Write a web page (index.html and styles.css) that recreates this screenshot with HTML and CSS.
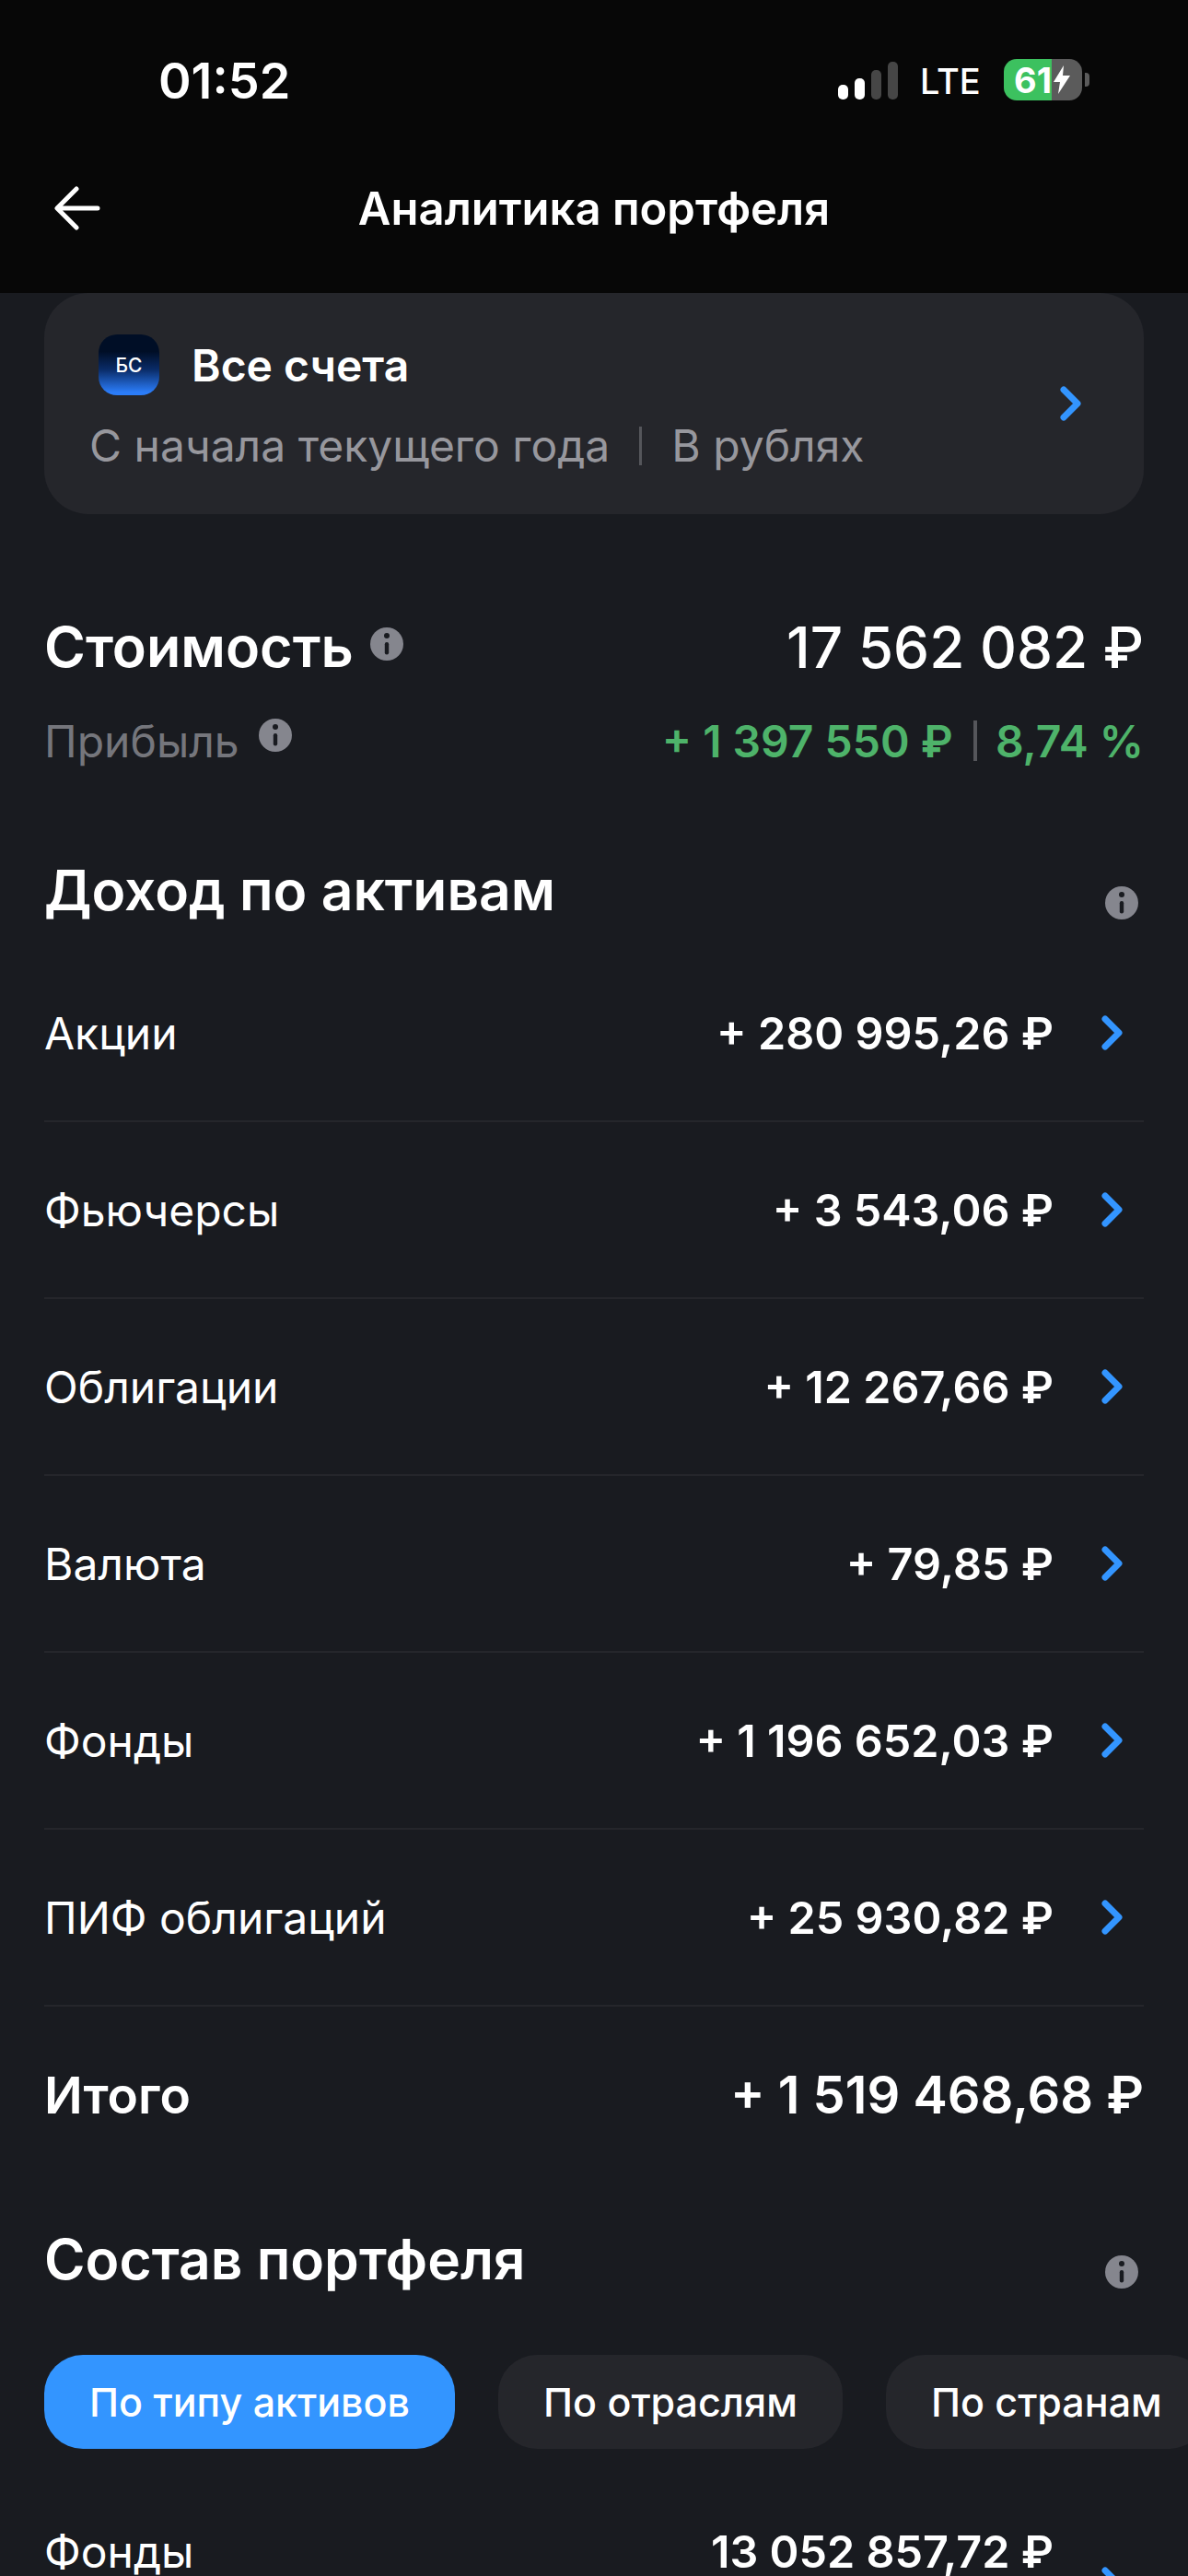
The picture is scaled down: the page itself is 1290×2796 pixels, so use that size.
FILE: index.html
```html
<!DOCTYPE html>
<html>

<head>
  <title>Аналитика портфеля</title>
  <meta charset="utf-8">
  <link rel="stylesheet" href="styles.css">
</head>

<body>
  <svg class="sprite" width="0" height="0">
    <symbol id="chevron" viewBox="0 0 24 38">
      <path d="M4 4 L19 19 L4 34" fill="none" stroke="#3395ff" stroke-width="7" stroke-linecap="round" stroke-linejoin="round"/>
    </symbol>
    <symbol id="info" viewBox="0 0 36 36">
      <circle cx="18" cy="18" r="18" fill="#85868e"/>
      <circle cx="18" cy="9" r="3" fill="#191b20"/>
      <rect x="15.8" y="16" width="4.4" height="13.5" rx="2.2" fill="#191b20"/>
    </symbol>
  </svg>

  <header class="top">
    <div class="status">
      <span class="clock">01:52</span>
      <div class="status-right">
        <div class="signal">
          <i class="bar bar-1 on"></i>
          <i class="bar bar-2 on"></i>
          <i class="bar bar-3"></i>
          <i class="bar bar-4"></i>
        </div>
        <span class="lte">LTE</span>
        <div class="battery">
          <span>61</span>
          <svg width="20" height="31" viewBox="0 0 20 31"><path d="M12 0 L1 18 H8 L6 31 L19 11 H11 Z" fill="#fff"/></svg>
        </div>
        <i class="nub"></i>
      </div>
    </div>
    <div class="nav">
      <svg class="back" width="54" height="48" viewBox="0 0 54 48">
        <path d="M25 3 L4 24 L25 45 M5 24 H48" fill="none" stroke="#fff" stroke-width="5" stroke-linecap="round" stroke-linejoin="round"/>
      </svg>
      <span class="nav-title">Аналитика портфеля</span>
    </div>
  </header>

  <main class="content">
    <section class="account">
      <div class="account-text">
        <div class="account-name">
          <div class="logo">БС</div>
          <span>Все счета</span>
        </div>
        <div class="account-sub">
          <span>С начала текущего года</span>
          <i class="divider"></i>
          <span>В рублях</span>
        </div>
      </div>
      <svg class="chevron"><use href="#chevron"/></svg>
    </section>

    <section class="summary">
      <div class="summary-row">
        <div class="label-big">Стоимость <svg class="info"><use href="#info"/></svg></div>
        <div class="value-big">17 562 082 ₽</div>
      </div>
      <div class="summary-row second">
        <div class="label-gray">Прибыль <svg class="info"><use href="#info"/></svg></div>
        <div class="value-green">+ 1 397 550 ₽ <i class="green-sep"></i> 8,74 %</div>
      </div>
    </section>

    <section class="section income">
      <div class="section-head">
        <h2>Доход по активам</h2>
        <svg class="info end"><use href="#info"/></svg>
      </div>
      <div class="row"><span>Акции</span><b>+ 280 995,26 ₽</b><svg class="chevron"><use href="#chevron"/></svg></div>
      <div class="row"><span>Фьючерсы</span><b>+ 3 543,06 ₽</b><svg class="chevron"><use href="#chevron"/></svg></div>
      <div class="row"><span>Облигации</span><b>+ 12 267,66 ₽</b><svg class="chevron"><use href="#chevron"/></svg></div>
      <div class="row"><span>Валюта</span><b>+ 79,85 ₽</b><svg class="chevron"><use href="#chevron"/></svg></div>
      <div class="row"><span>Фонды</span><b>+ 1 196 652,03 ₽</b><svg class="chevron"><use href="#chevron"/></svg></div>
      <div class="row"><span>ПИФ облигаций</span><b>+ 25 930,82 ₽</b><svg class="chevron"><use href="#chevron"/></svg></div>
      <div class="total"><span>Итого</span><b>+ 1 519 468,68 ₽</b></div>
    </section>

    <section class="section structure">
      <div class="section-head">
        <h2>Состав портфеля</h2>
        <svg class="info end"><use href="#info"/></svg>
      </div>
      <div class="pills">
        <div class="pill active">По типу активов</div>
        <div class="pill">По отраслям</div>
        <div class="pill">По странам</div>
      </div>
      <div class="row last"><span>Фонды</span><b>13 052 857,72 ₽</b><svg class="chevron"><use href="#chevron"/></svg></div>
    </section>
  </main>
</body>

</html>
```
FILE: styles.css
```css
html, body {
  margin: 0;
  height: 2796px;
  overflow: hidden;
}

body {
  width: 1290px;
  background-color: #191b20;
  color: #fff;
  font-family: "Inter", "Liberation Sans", sans-serif;
}

.sprite {
  position: absolute;
}

/* status bar and title */
.top {
  height: 318px;
  background-color: #070707;
}

.status {
  height: 174px;
  box-sizing: border-box;
  padding: 58px 0 0 172px;
  display: flex;
  justify-content: space-between;
}

.clock {
  font-size: 54px;
  line-height: 60px;
  font-weight: 600;
}

.status-right {
  height: 45px;
  margin-top: 6px;
  padding-right: 107px;
  display: flex;
  align-items: center;
}

.signal {
  display: flex;
  align-items: flex-end;
  gap: 7px;
  height: 41px;
  margin-top: 1px;
}

.bar {
  display: block;
  width: 11px;
  border-radius: 5px;
  background-color: #464646;
}

.bar.on {
  background-color: #fff;
}

.bar-1 { height: 16px; }
.bar-2 { height: 23px; }
.bar-3 { height: 32px; }
.bar-4 { height: 41px; }

.lte {
  margin: 3px 0 0 24px;
  width: 91px;
  font-size: 38px;
  font-weight: 500;
}

.battery {
  width: 85px;
  height: 45px;
  border-radius: 14px;
  box-sizing: border-box;
  padding-left: 11px;
  display: flex;
  align-items: center;
  gap: 1px;
  font-size: 38px;
  font-weight: 700;
  background: linear-gradient(to right, #3cc15f 52px, #5b5b5b 52px);
}

.nub {
  display: block;
  width: 5px;
  height: 15px;
  margin-left: 3px;
  border-radius: 0 4px 4px 0;
  background-color: #5b5b5b;
}

.nav {
  display: flex;
  align-items: center;
  position: relative;
  justify-content: center;
  height: 104px;
}

.back {
  position: absolute;
  left: 58px;
  top: 28px;
}

.nav-title {
  font-size: 49px;
  font-weight: 600;
}

.content {
  padding: 0 48px;
}

/* account card */
.account {
  height: 240px;
  box-sizing: border-box;
  padding: 0 67px 0 49px;
  display: flex;
  align-items: center;
  justify-content: space-between;
  border-radius: 48px;
  background-color: #25262b;
}

.account-text {
  align-self: flex-start;
  margin-top: 45px;
}

.account-name {
  display: flex;
  align-items: center;
  gap: 35px;
  padding-left: 10px;
  font-size: 48px;
  font-weight: 600;
}

.logo {
  width: 66px;
  height: 66px;
  border-radius: 20px;
  display: flex;
  align-items: center;
  justify-content: center;
  font-size: 21px;
  font-weight: 500;
  background: linear-gradient(to bottom, #000e26 28%, #0a2c68 58%, #2b7cf8 95%);
}

.account-sub {
  margin-top: 25px;
  display: flex;
  align-items: center;
  gap: 32px;
  font-size: 48px;
  color: #97979d;
}

.divider {
  display: block;
  width: 3px;
  height: 42px;
  background-color: #55565b;
}

.chevron {
  width: 24px;
  height: 38px;
  flex: none;
}

/* value and profit */
.summary {
  margin-top: 108px;
}

.summary-row {
  display: flex;
  justify-content: space-between;
  align-items: center;
  height: 72px;
}

.summary-row.second {
  margin-top: 30px;
}

.label-big {
  font-size: 61px;
  font-weight: 600;
  display: flex;
  align-items: center;
  gap: 18px;
}

.label-big .info {
  margin-bottom: 6px;
}

.value-big {
  font-size: 62px;
  font-weight: 500;
}

.label-gray {
  font-size: 48px;
  color: #75767c;
  display: flex;
  align-items: center;
  gap: 21px;
}

.label-gray .info {
  margin-bottom: 12px;
}

.value-green {
  font-size: 48px;
  font-weight: 600;
  color: #4eb36a;
  display: flex;
  align-items: center;
  white-space: pre;
}

.green-sep {
  display: block;
  width: 4px;
  height: 44px;
  margin: 0 8px 0 10px;
  background-color: #55565b;
}

.info {
  width: 36px;
  height: 36px;
  flex: none;
}

/* lists */
.income {
  margin-top: 90px;
}

.structure {
  margin-top: 46px;
}

.section-head {
  display: flex;
  justify-content: space-between;
  height: 72px;
  align-items: center;
}

.section-head h2 {
  margin: 0;
  font-size: 60.5px;
  font-weight: 600;
}

.info.end {
  margin: 28px 6px 0 0;
}

.row {
  height: 192px;
  box-sizing: border-box;
  display: flex;
  align-items: center;
  border-bottom: 2px solid #25262b;
  font-size: 48px;
}

.section-head + .row {
  margin-top: 24px;
}

.row span {
  flex: 1;
}

.row b {
  font-size: 48.5px;
  font-weight: 600;
}

.row .chevron {
  margin: 0 22px 0 52px;
}

.total {
  height: 192px;
  display: flex;
  align-items: center;
  justify-content: space-between;
  font-size: 55px;
  font-weight: 600;
}

.total b {
  font-size: 56px;
  font-weight: 600;
}

.pills {
  display: flex;
  gap: 47px;
  margin-top: 68px;
  width: 1300px;
}

.pill {
  height: 102px;
  box-sizing: border-box;
  padding: 0 49px;
  display: flex;
  align-items: center;
  border-radius: 42px;
  background-color: #25262b;
  font-size: 43px;
  font-weight: 500;
  white-space: nowrap;
}

.pill.active {
  background-color: #3395ff;
}

/* this row is cut off by the bottom of the screen */
.row.last {
  height: 160px;
  border-bottom: 0;
  margin-top: 82px;
  align-items: flex-start;
  line-height: 60px;
}

.row.last .chevron {
  margin-top: 46px;
}
```
